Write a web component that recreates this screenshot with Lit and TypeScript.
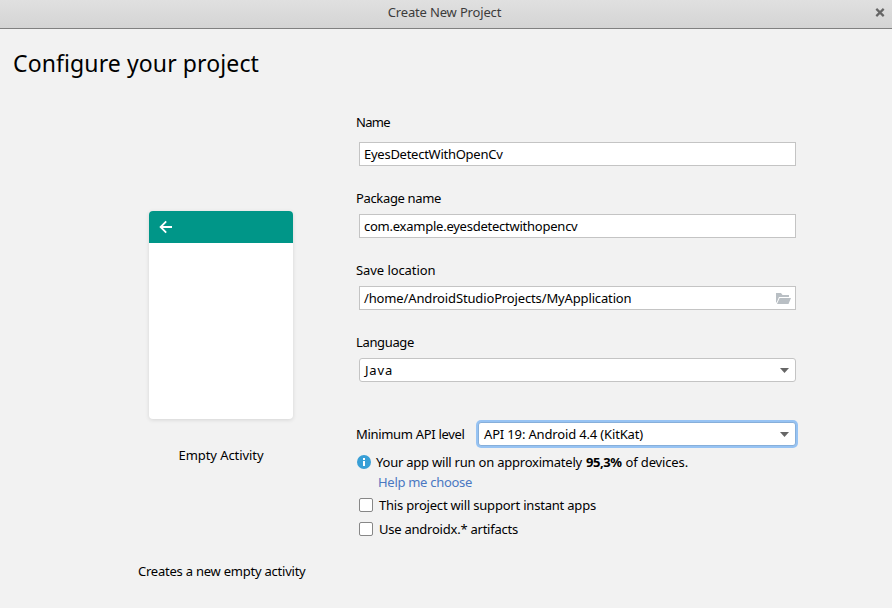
import { LitElement, html, css, svg } from "lit";
import { customElement, property, query } from "lit/decorators.js";

/** Single line of text whose tracking is adjusted to fill a given width. */
@customElement("fit-text")
class FitText extends LitElement {
  static styles = css`
    :host { display: inline-block; white-space: pre; line-height: inherit; }
    .run { display: inline-block; }
  `;
  @property({ type: Number }) width = 0;
  @property() text = "";
  @query(".run") run!: HTMLElement;

  render() {
    return html`<span class="run">${this.text}</span>`;
  }

  updated() {
    this.run.style.letterSpacing = "0";
    const natural = this.run.getBoundingClientRect().width;
    const tracking = (this.width - natural) / this.text.length;
    this.run.style.letterSpacing = `${tracking.toFixed(4)}px`;
  }
}

const t = (text: string, width: number) =>
  html`<fit-text .text=${text} .width=${width}></fit-text>`;

const closeIcon = svg`<svg class="close" width="10" height="9" viewBox="0 0 10 9">
  <path d="M1.3 0.9L8.7 8.1M8.7 0.9L1.3 8.1" stroke="#666" stroke-width="2.2" fill="none"/></svg>`;
const backIcon = svg`<svg width="14" height="14" viewBox="0 0 14 14">
  <path d="M7.2 1.4L1.6 7L7.2 12.6M1.8 7H13" stroke="#fff" stroke-width="1.8" fill="none"/></svg>`;
const folderIcon = svg`<svg width="15" height="11" viewBox="0 0 15 11">
  <path d="M0 0H5L6.5 2H13V4H3L0.7 9.5H0Z" fill="#b9bfc4"/>
  <path d="M3.6 5H15L12.5 11H1Z" fill="#b9bfc4"/></svg>`;
const caretIcon = svg`<svg width="9" height="5" viewBox="0 0 9 5">
  <path d="M0 0H9L4.5 5Z" fill="#666"/></svg>`;
const infoIcon = svg`<svg width="14" height="14" viewBox="0 0 14 14">
  <circle cx="7" cy="7" r="7" fill="#389fd6"/>
  <path d="M6 3H8V5H6ZM6 6H8V11H6Z" fill="#fff"/></svg>`;

@customElement("app-root")
class AppRoot extends LitElement {
  static styles = css`
    :host {
      display: flex; flex-direction: column; width: 892px; height: 608px;
      overflow: hidden; background: #f2f2f2; color: #000;
      font: 13px/18px "Noto Sans", "Open Sans", sans-serif;
    }
    * { box-sizing: border-box; }
    svg { display: block; flex: none; }
    .titlebar {
      display: grid; grid-template-columns: 1fr auto 1fr; height: 29px; flex: none;
      padding: 3px 7px 0 4px; color: #3c3c3c;
      background: linear-gradient(#e0e0e0, #d4d4d4); border-bottom: 1px solid #808080;
    }
    .close { justify-self: end; margin-top: 5px; }
    h1 { margin: 16px 0 1px 13px; height: 36px; font-size: 23px; line-height: 36px; font-weight: 400; }
    .content { display: grid; grid-template-columns: 293px 440px; column-gap: 63px; }
    .preview { display: flex; flex-direction: column; align-items: center; padding: 129px 0 0 149px; }
    .card {
      width: 144px; height: 208px; border-radius: 4px; background: #fff;
      overflow: hidden; box-shadow: 0 1px 4px rgba(0, 0, 0, 0.12); flex: none;
    }
    .appbar { height: 32px; background: #009688; padding: 9px 0 0 10px; }
    .caption { height: 18px; margin-top: 27px; white-space: nowrap; display: flex; justify-content: center; }
    .about { height: 18px; margin-top: 98px; width: 166px; }
    .form { display: flex; flex-direction: column; padding-top: 31px; }
    .label { height: 18px; }
    .field {
      display: flex; align-items: center; justify-content: space-between;
      height: 24px; margin: 7px 0 23px 3px; padding: 0 5px 0 4px;
      border: 1px solid #c4c4c4; background: #fff;
    }
    .field.first { margin-top: 11px; }
    .field.location { padding-right: 4px; }
    .select { padding: 0 6px 0 5px; border-radius: 3px; }
    .api { display: flex; height: 24px; margin-top: 17px; align-items: center; }
    .api .label { width: 122px; }
    .api .field {
      flex: 1; margin: 0; border-color: #87afda; box-shadow: 0 0 0 2px #97c3f3; border-radius: 3px;
    }
    .info { display: flex; align-items: center; height: 18px; margin-top: 7px; padding-left: 1px; white-space: nowrap; }
    .info svg { margin-right: 5px; }
    .info b { font-weight: 700; margin: 0 4px 0 4px; }
    .help { height: 18px; margin: 2px 0 0 22px; color: #4a78c2; }
    .check { display: flex; align-items: center; height: 18px; margin: 5px 0 1px 3px; }
    .box {
      width: 14px; height: 14px; margin-right: 6px; background: #fff;
      border: 1px solid #878787; border-radius: 2px;
    }
  `;

  render() {
    return html`
      <div class="titlebar"><span></span>${t("Create New Project", 113.5)}${closeIcon}</div>
      <h1>${t("Configure your project", 246)}</h1>
      <div class="content">
        <div class="preview">
          <div class="card"><div class="appbar">${backIcon}</div></div>
          <div class="caption">${t("Empty Activity", 85)}</div>
          <div class="about">${t("Creates a new empty activity", 167.5)}</div>
        </div>
        <div class="form">
          <div class="label">${t("Name", 34)}</div>
          <div class="field first">${t("EyesDetectWithOpenCv", 138.5)}</div>
          <div class="label">${t("Package name", 85)}</div>
          <div class="field">${t("com.example.eyesdetectwithopencv", 213.5)}</div>
          <div class="label">${t("Save location", 79.5)}</div>
          <div class="field location">${t("/home/AndroidStudioProjects/MyApplication", 267.5)}${folderIcon}</div>
          <div class="label">${t("Language", 58)}</div>
          <div class="field select">${t("Java", 28)}${caretIcon}</div>
          <div class="api">
            <div class="label">${t("Minimum API level", 108.5)}</div>
            <div class="field select">${t("API 19: Android 4.4 (KitKat)", 159)}${caretIcon}</div>
          </div>
          <div class="info">
            ${infoIcon}${t("Your app will run on approximately", 206)}<b>${t("95,3%", 35.5)}</b>${t("of devices.", 62.5)}
          </div>
          <div class="help">${t("Help me choose", 94)}</div>
          <div class="check"><span class="box"></span>${t("This project will support instant apps", 217)}</div>
          <div class="check"><span class="box"></span>${t("Use androidx.* artifacts", 139)}</div>
        </div>
      </div>
    `;
  }
}
